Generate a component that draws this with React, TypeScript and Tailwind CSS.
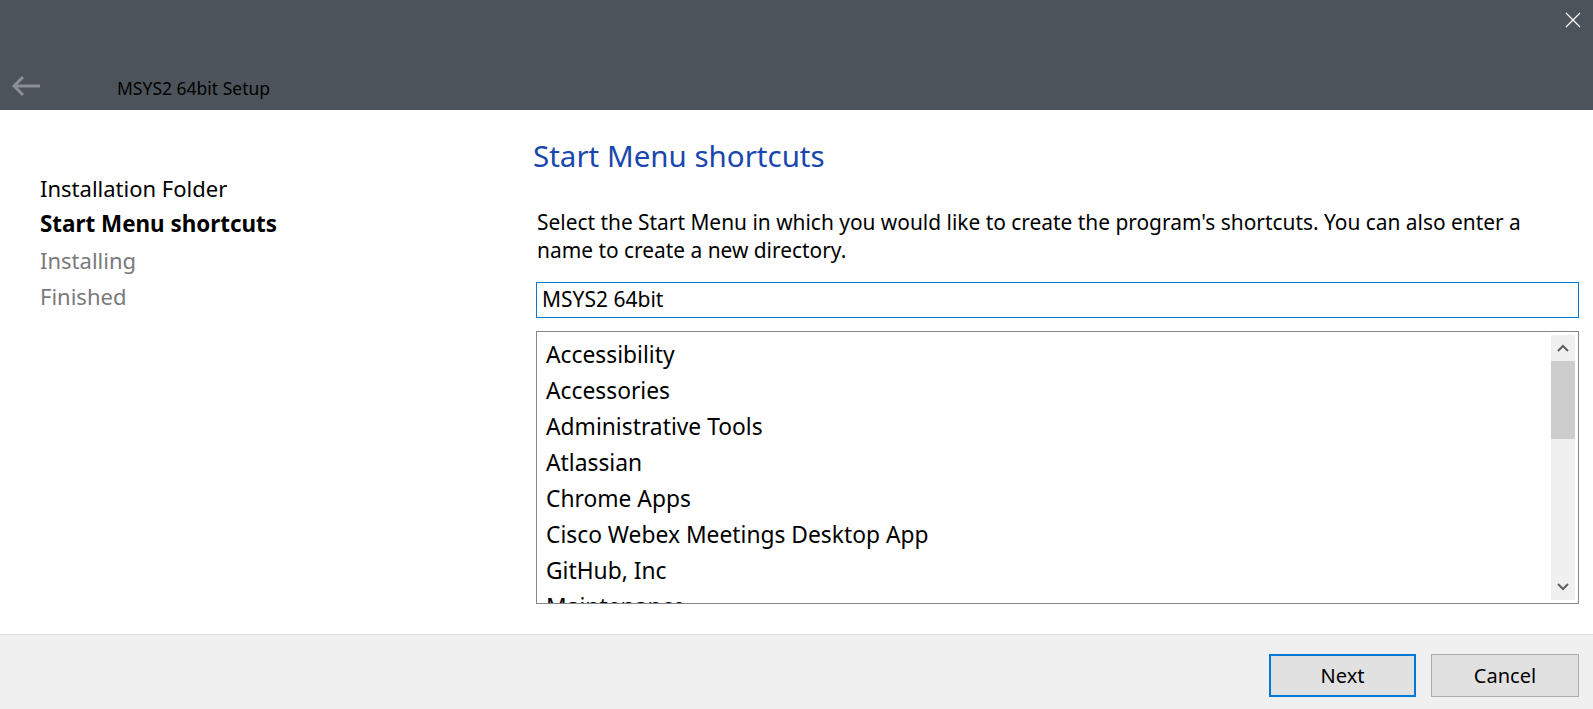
import React from 'react';

const font = { fontFamily: '"Noto Sans", "Open Sans", sans-serif' };

const steps = [
  { label: 'Installation Folder', state: 'done' },
  { label: 'Start Menu shortcuts', state: 'current' },
  { label: 'Installing', state: 'todo' },
  { label: 'Finished', state: 'todo' },
];

const folders = [
  'Accessibility',
  'Accessories',
  'Administrative Tools',
  'Atlassian',
  'Chrome Apps',
  'Cisco Webex Meetings Desktop App',
  'GitHub, Inc',
  'Maintenance',
];

export default function App() {
  return (
    <div className="w-[1593px] h-[709px] flex flex-col bg-white overflow-hidden" style={font}>
      {/* title bar */}
      <div className="h-[110px] bg-[#4c535a] relative flex items-end pb-[10px]">
        <svg width="30" height="22" viewBox="0 0 30 22" className="ml-[12px] mb-[3px]">
          <path d="M2 11 H28 M11 2 L2 11 L11 20" stroke="#8c9095" strokeWidth="3" fill="none" />
        </svg>
        <span className="ml-[75px] text-[17.5px] leading-[24px] text-black">MSYS2 64bit Setup</span>
        <svg width="16" height="16" viewBox="0 0 16 16" className="absolute right-[12px] top-[12px]">
          <path d="M1 1 L15 15 M15 1 L1 15" stroke="#ffffff" strokeWidth="1.2" />
        </svg>
      </div>

      {/* body */}
      <div className="flex flex-1">
        <div className="w-[536px] pl-[40px] pt-[60px]">
          {steps.map((s) => (
            <div
              key={s.label}
              className={`leading-[36px] ${
                s.state === 'current'
                  ? 'text-[22.4px] font-bold text-black'
                  : s.state === 'done'
                  ? 'text-[22px] text-black'
                  : 'text-[22px] text-[#7a7a7a]'
              }`}
            >
              {s.label}
            </div>
          ))}
        </div>

        <div className="flex-1 pr-[14px] pt-[27px]">
          <h1 className="text-[29.5px] leading-[38px] text-[#1a47ad] -ml-[3px]">Start Menu shortcuts</h1>
          <p className="mt-[33px] text-[20.9px] leading-[28px] text-black pl-[1px] whitespace-nowrap">
            Select the Start Menu in which you would like to create the program's shortcuts. You can also enter a
            <br />
            name to create a new directory.
          </p>
          <div className="mt-[18px] h-[36px] border border-[#0078d7] flex items-center px-[5px] text-[21px] text-black">
            MSYS2 64bit
          </div>
          <div className="mt-[13px] h-[273px] border border-[#828790] flex relative overflow-hidden">
            <div className="flex-1 pl-[9px] pt-[5px]">
              {folders.map((f) => (
                <div key={f} className="text-[22.8px] leading-[36px] text-black whitespace-nowrap">
                  {f}
                </div>
              ))}
            </div>
            <div className="w-[24px] my-[3px] mr-[3px] bg-[#f0f0f0] flex flex-col items-center">
              <div className="h-[26px] w-full flex items-center justify-center">
                <svg width="12" height="8" viewBox="0 0 12 8">
                  <path d="M1 7 L6 2 L11 7" stroke="#606060" strokeWidth="2" fill="none" />
                </svg>
              </div>
              <div className="h-[78px] w-full bg-[#cdcdcd]" />
              <div className="flex-1" />
              <div className="h-[26px] w-full flex items-center justify-center">
                <svg width="12" height="8" viewBox="0 0 12 8">
                  <path d="M1 1 L6 6 L11 1" stroke="#606060" strokeWidth="2" fill="none" />
                </svg>
              </div>
            </div>
          </div>
        </div>
      </div>

      {/* footer */}
      <div className="h-[75px] border-t border-[#dfdfdf] bg-[#f0f0f0] flex justify-end items-start pt-[19px] pr-[14px] gap-[15px]">
        <button className="w-[147px] h-[43px] bg-[#e1e1e1] border-2 border-[#0078d7] text-[20px] text-black">
          Next
        </button>
        <button className="w-[148px] h-[43px] bg-[#e1e1e1] border border-[#adadad] text-[20px] text-black">
          Cancel
        </button>
      </div>
    </div>
  );
}
